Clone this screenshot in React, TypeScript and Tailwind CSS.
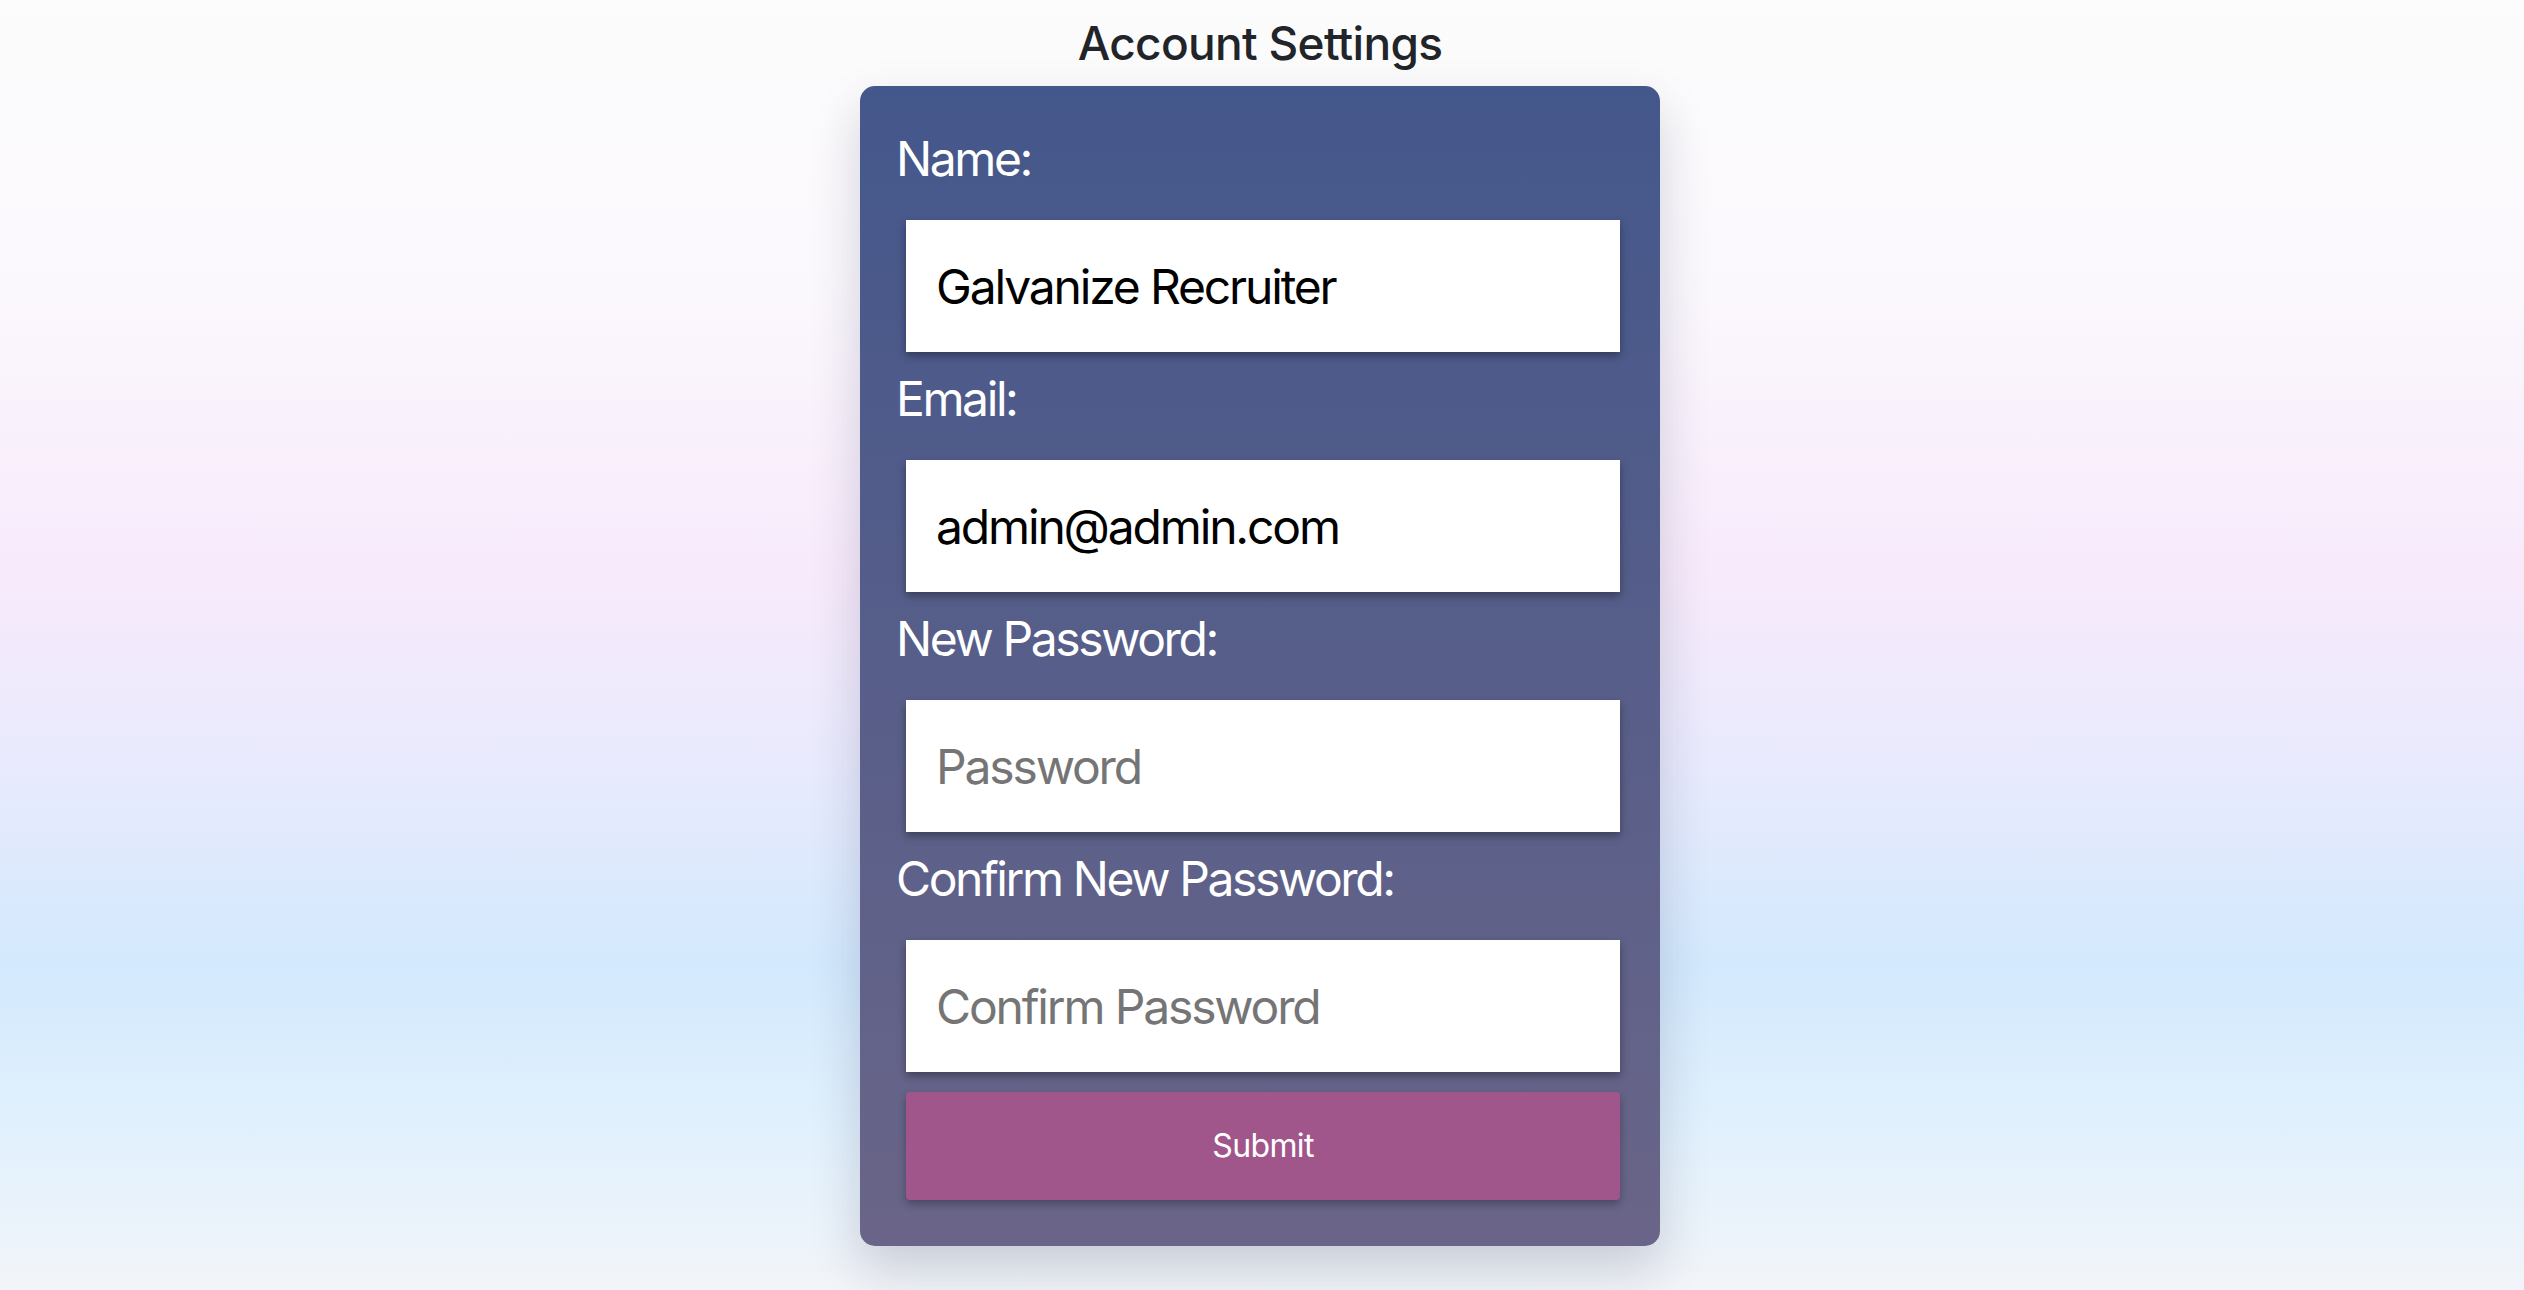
import type { ReactNode } from "react";

const fields = [
  { label: "Name:", value: "Galvanize Recruiter", placeholder: "Name", type: "text" },
  { label: "Email:", value: "admin@admin.com", placeholder: "Email", type: "email" },
  { label: "New Password:", value: "", placeholder: "Password", type: "password" },
  { label: "Confirm New Password:", value: "", placeholder: "Confirm Password", type: "password" },
];

function FieldLabel({ children }: { children: ReactNode }) {
  return <label className="ml-[2px] block text-[48px] leading-[58px] tracking-[-0.05em] text-white">{children}</label>;
}

export default function App() {
  return (
    <div className="flex min-h-screen flex-col items-center bg-[linear-gradient(180deg,#fcfcfc_0%,#fbf8fd_22%,#f7eafb_45%,#e9eafd_59%,#d3e9fd_75%,#e2f1fd_88%,#f2f4f8_100%)] pr-[4px] font-['Inter','Liberation_Sans',sans-serif]">
      <h1 className="mt-[15px] text-[46px] font-medium leading-[56px] tracking-[-0.015em] text-[#212529]">Account Settings</h1>
      <form
        className="mt-[15px] w-[800px] rounded-[15px] bg-[linear-gradient(180deg,#44578b,#6a6588)] pb-[46px] pl-[34px] pt-[44px] shadow-[0_22px_50px_rgba(20,30,60,0.18)]"
        onSubmit={(e) => e.preventDefault()}
      >
        {fields.map((field, index) => (
          <div key={field.label} className={index < fields.length - 1 ? "mb-[18px]" : ""}>
            <FieldLabel>{field.label}</FieldLabel>
            <input
              type={field.type === "password" ? "password" : "text"}
              defaultValue={field.value}
              placeholder={field.placeholder}
              className="ml-[12px] mt-[32px] block h-[132px] w-[714px] bg-white pl-[30px] text-[48px] tracking-[-0.045em] text-black shadow-[0_4px_8px_rgba(0,0,0,0.35)] outline-none placeholder:text-[#757575]"
            />
          </div>
        ))}
        <button
          type="submit"
          className="ml-[12px] mt-[20px] block h-[108px] w-[714px] rounded-[4px] bg-[#a0568a] text-[32px] tracking-[-0.02em] text-white shadow-[0_4px_8px_rgba(0,0,0,0.3)]"
        >
          Submit
        </button>
      </form>
    </div>
  );
}
